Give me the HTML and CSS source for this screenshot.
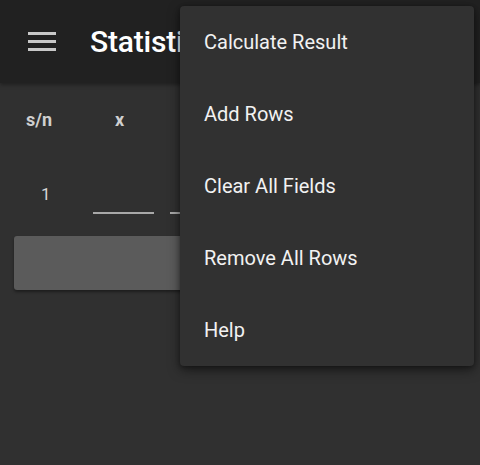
FILE: index.html
```html
<!DOCTYPE html>
<html>
<head>
<meta charset="utf-8">
<link rel="stylesheet" href="styles.css">
</head>
<body>
<div class="app">
  <header class="appbar">
    <div class="menu-icon"><span></span><span></span><span></span></div>
    <h1 class="title">Statistics</h1>
  </header>
  <main class="content">
    <div class="table-head">
      <div class="col-sn">s/n</div>
      <div class="col-x">x</div>
      <div class="col-f">f</div>
      <div class="col-end">fx</div>
    </div>
    <div class="table-row">
      <div class="col-sn num">1</div>
      <div class="col-x"><div class="field"></div></div>
      <div class="col-f"><div class="field wide"></div></div>
    </div>
    <button class="calc-btn"></button>
  </main>
  <nav class="popup">
    <div class="item">Calculate Result</div>
    <div class="item">Add Rows</div>
    <div class="item">Clear All Fields</div>
    <div class="item">Remove All Rows</div>
    <div class="item">Help</div>
  </nav>
</div>
</body>
</html>
```
FILE: styles.css
```css
html, body {
  margin: 0;
  padding: 0;
  background: #303030;
  font-family: Roboto, "Noto Sans", sans-serif;
}
.app {
  position: relative;
  width: 480px;
  height: 465px;
  overflow: hidden;
  background: #303030;
}
.appbar {
  height: 83px;
  background: #212121;
  display: flex;
  align-items: center;
  box-shadow: 0 2px 4px rgba(0,0,0,0.35);
  position: relative;
  z-index: 1;
}
.menu-icon {
  width: 28px;
  margin-left: 28px;
  display: flex;
  flex-direction: column;
  gap: 5px;
  margin-top: -1px;
}
.menu-icon span {
  display: block;
  height: 3px;
  background: #c8c8c8;
}
.title {
  margin: -1px 0 0 34px;
  font-size: 30px;
  font-weight: 500;
  color: #ffffff;
  letter-spacing: -0.2px;
  white-space: nowrap;
}
.content {
  padding: 0 14px;
}
.table-head {
  display: flex;
  align-items: center;
  height: 72px;
  font-weight: 700;
  font-size: 18px;
  color: #cfcfcf;
}
.table-row {
  display: flex;
  align-items: flex-start;
  height: 80px;
  color: #d6d6d6;
  font-size: 17px;
}
.col-sn {
  width: 79px;
  padding-left: 12px;
  box-sizing: border-box;
}
.col-x {
  width: 77px;
  padding-left: 22px;
  box-sizing: border-box;
}
.col-f {
  flex: 1;
}
.table-head .col-f {
  text-align: center;
}
.col-end {
  width: 20px;
  text-align: right;
  font-size: 14px;
}
.num {
  padding-top: 29px;
  font-weight: 400;
  padding-left: 27px;
}
.table-row .col-x {
  padding-left: 0;
}
.field {
  margin-top: 57px;
  height: 2px;
  width: 61px;
  background: #a8a8a8;
}
.field.wide {
  width: 120px;
}
.calc-btn {
  display: block;
  width: 100%;
  height: 54px;
  border: none;
  border-radius: 3px;
  background: #5b5b5b;
  box-shadow: 0 2px 3px rgba(0,0,0,0.4);
  margin-top: 1px;
}
.popup {
  position: absolute;
  left: 180px;
  top: 6px;
  width: 294px;
  background: #313131;
  border-radius: 4px;
  box-shadow: 0 4px 12px rgba(0,0,0,0.5), 0 1px 4px rgba(0,0,0,0.3);
  z-index: 5;
}
.item {
  height: 72px;
  display: flex;
  align-items: center;
  padding-left: 24px;
  font-size: 20px;
  color: #f2f2f2;
}
```
